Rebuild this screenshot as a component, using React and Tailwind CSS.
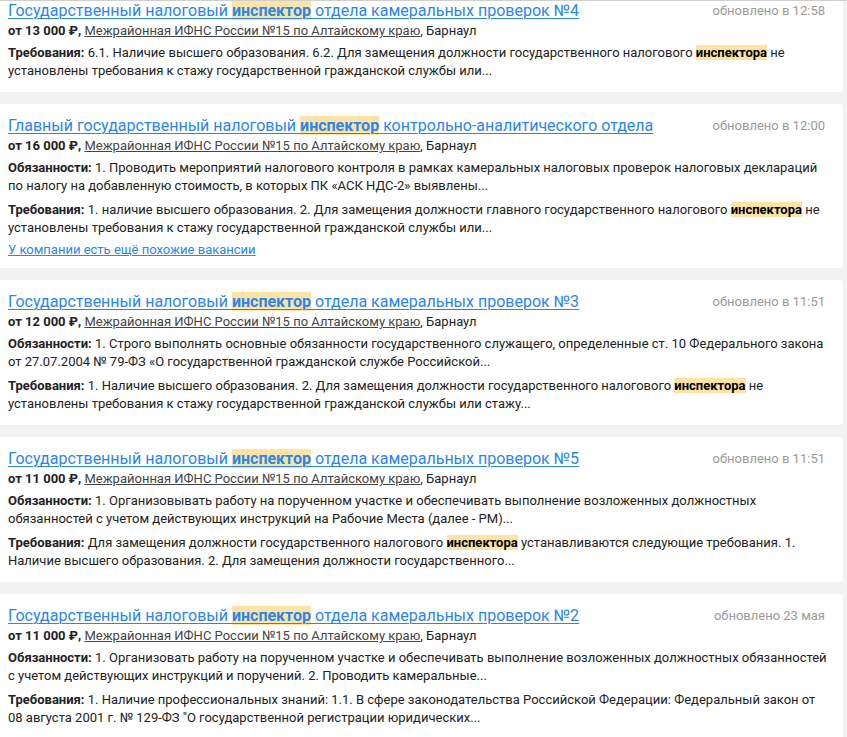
import React from "react";

const H = ({ children, bold }) => (
  <span className={"bg-[#fde3a6] font-bold " + (bold ? "text-black" : "")}>{children}</span>
);

const cards = [
  {
    pre: "Государственный налоговый ",
    post: " отдела камеральных проверок №4",
    date: "обновлено в 12:58",
    salary: "от 13 000 ₽,",
    duties: null,
    req: (
      <>
        6.1. Наличие высшего образования. 6.2. Для замещения должности государственного налогового <H bold>инспектора</H> не установлены требования к стажу государственной гражданской службы или...
      </>
    ),
  },
  {
    pre: "Главный государственный налоговый ",
    post: " контрольно-аналитического отдела",
    date: "обновлено в 12:00",
    salary: "от 16 000 ₽,",
    duties: "1. Проводить мероприятий налогового контроля в рамках камеральных налоговых проверок налоговых деклараций по налогу на добавленную стоимость, в которых ПК «АСК НДС-2» выявлены...",
    req: (
      <>
        1. наличие высшего образования. 2. Для замещения должности главного государственного налогового <H bold>инспектора</H> не установлены требования к стажу государственной гражданской службы или...
      </>
    ),
    more: true,
  },
  {
    pre: "Государственный налоговый ",
    post: " отдела камеральных проверок №3",
    date: "обновлено в 11:51",
    salary: "от 12 000 ₽,",
    duties: "1. Строго выполнять основные обязанности государственного служащего, определенные ст. 10 Федерального закона от 27.07.2004 № 79-ФЗ «О государственной гражданской службе Российской...",
    req: (
      <>
        1. Наличие высшего образования. 2. Для замещения должности государственного налогового <H bold>инспектора</H> не установлены требования к стажу государственной гражданской службы или стажу...
      </>
    ),
  },
  {
    pre: "Государственный налоговый ",
    post: " отдела камеральных проверок №5",
    date: "обновлено в 11:51",
    salary: "от 11 000 ₽,",
    duties: "1. Организовывать работу на порученном участке и обеспечивать выполнение возложенных должностных обязанностей с учетом действующих инструкций на Рабочие Места (далее - РМ)...",
    req: (
      <>
        Для замещения должности государственного налогового <H bold>инспектора</H> устанавливаются следующие требования. 1. Наличие высшего образования. 2. Для замещения должности государственного...
      </>
    ),
  },
  {
    pre: "Государственный налоговый ",
    post: " отдела камеральных проверок №2",
    date: "обновлено 23 мая",
    salary: "от 11 000 ₽,",
    duties: "1. Организовать работу на порученном участке и обеспечивать выполнение возложенных должностных обязанностей с учетом действующих инструкций и поручений. 2. Проводить камеральные...",
    req: (
      <>
        1. Наличие профессиональных знаний: 1.1. В сфере законодательства Российской Федерации: Федеральный закон от 08 августа 2001 г. № 129-ФЗ "О государственной регистрации юридических...
      </>
    ),
  },
];

function Card({ c }) {
  return (
    <div className="w-[843px] bg-white rounded-r-[4px] pl-[8px] pr-[15px] pt-[12px] pb-[12px]">
      <div className="flex justify-between items-start">
        <a className="text-[16px] leading-[20px] text-[#2a86ec] underline decoration-1 underline-offset-[2px]">
          {c.pre}
          <H>инспектор</H>
          {c.post}
        </a>
        <span className="mr-[3px] text-[13px] leading-[20px] text-[#9a9a9a] whitespace-nowrap">{c.date}</span>
      </div>
      <div className="text-[13px] leading-[20px] text-[#222]">
        <span className="font-bold">{c.salary}</span>{" "}
        <a className="underline text-[#444] decoration-[#444]">Межрайонная ИФНС России №15 по Алтайскому краю</a>, Барнаул
      </div>
      {c.duties && (
        <p className="mt-[3px] text-[13px] leading-[18px] text-[#222]">
          <span className="font-bold">Обязанности:</span> {c.duties}
        </p>
      )}
      <p className={(c.duties ? "mt-[6px]" : "mt-[3px]") + " text-[13px] leading-[18px] text-[#222]"}>
        <span className="font-bold">Требования:</span> {c.req}
      </p>
      {c.more && (
        <div className="mt-[5px] text-[13px] leading-[16px] -mb-[2px]">
          <a className="text-[#2a86ec] underline">У компании есть ещё похожие вакансии</a>
        </div>
      )}
    </div>
  );
}

export default function App() {
  return (
    <div
      className="h-[737px] overflow-hidden bg-[#f2f2f2] border-t border-[#cfcfcf]"
      style={{ fontFamily: "Roboto, 'Noto Sans', sans-serif" }}
    >
      <div className="-mt-[12px] flex flex-col gap-[12px]">
        {cards.map((c, i) => (
          <Card key={i} c={c} />
        ))}
      </div>
    </div>
  );
}
